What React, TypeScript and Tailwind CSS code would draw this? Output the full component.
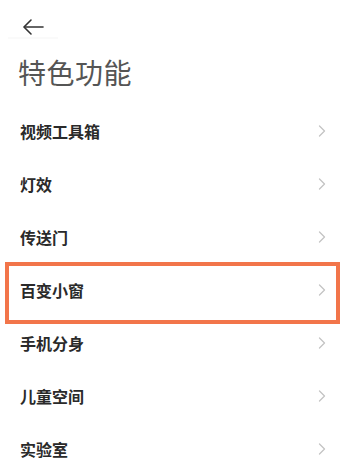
import React from "react";

const items = ["视频工具箱", "灯效", "传送门", "百变小窗", "手机分身", "儿童空间", "实验室"];

function Chevron() {
  return (
    <svg width="8" height="12" viewBox="0 0 8 12" fill="none">
      <path d="M1.5 1 L6.5 6 L1.5 11" stroke="#c4c4c4" strokeWidth="1.3" strokeLinecap="round" strokeLinejoin="round" />
    </svg>
  );
}

export default function App() {
  return (
    <div
      className="w-[350px] h-[475px] bg-white overflow-hidden"
      style={{ fontFamily: '"Noto Sans CJK SC", "Noto Sans", sans-serif' }}
    >
      {/* Header: back arrow */}
      <div className="h-[50px] flex flex-col">
        <div className="h-[36px] flex items-end pl-[22px]">
          <svg width="22" height="18" viewBox="0 0 22 18" fill="none">
            <path d="M21 9 H2.5" stroke="#333" strokeWidth="1.6" strokeLinecap="round" />
            <path d="M9 2 L2 9 L9 16" stroke="#333" strokeWidth="1.6" strokeLinecap="round" strokeLinejoin="round" />
          </svg>
        </div>
        <div className="ml-[8px] mt-[1px] w-[50px] h-[2px] bg-[#fafafa]" />
      </div>

      {/* Title */}
      <div className="h-[44px] flex items-center pl-[18px]">
        <span className="text-[28px] leading-none font-normal text-[#555555] tracking-[0.5px]">特色功能</span>
      </div>

      {/* List */}
      <div className="mt-[10px] flex flex-col">
        {items.map((label) => (
          <div key={label} className="relative h-[53px] flex items-center justify-between pl-[20px] pr-[24px]">
            <span className="text-[16px] leading-none font-semibold text-[#2a2a2a]">{label}</span>
            <Chevron />
            {label === "百变小窗" && (
              <div className="absolute left-[5px] right-[10px] top-[-1px] bottom-[-8px] border-4 border-[#f2754a] pointer-events-none" />
            )}
          </div>
        ))}
      </div>
    </div>
  );
}
